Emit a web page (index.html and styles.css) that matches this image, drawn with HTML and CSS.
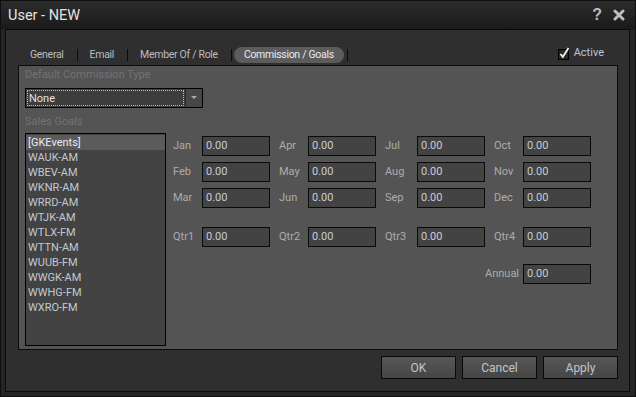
FILE: index.html
```html
<!DOCTYPE html>
<html>
<head>
	<meta charset="utf-8">
	<title>User - NEW</title>
	<link rel="stylesheet" href="styles.css">
</head>
<body>
	<div class="window">
		<div class="titlebar">
			<span class="title">User - NEW</span>
			<span class="help">?</span>
			<svg class="close" width="12" height="12" viewBox="0 0 12 12">
				<path d="M2 2 L10 10 M10 2 L2 10" stroke="#bdbdbd" stroke-width="3" stroke-linecap="round"/>
			</svg>
		</div>
		<div class="frame">
			<div class="tabbar">
				<ul class="tabs">
					<li>General</li>
					<li class="sep"></li>
					<li>Email</li>
					<li class="sep"></li>
					<li>Member Of / Role</li>
					<li class="sep"></li>
					<li class="current">Commission / Goals</li>
					<li class="sep"></li>
				</ul>
				<div class="active-check">
					<svg width="13" height="15" viewBox="0 0 13 15">
						<rect x="0.5" y="3.5" width="10" height="10" fill="#262626" stroke="#000"/>
						<path d="M2.5 8 L4.8 11 L10.5 2" fill="none" stroke="#f2f2f2" stroke-width="1.8"/>
					</svg>
					<span>Active</span>
				</div>
			</div>

			<div class="panel">
				<div class="caption">Default Commission Type</div>
				<div class="combo">
					<div class="combo-text"><span>None</span></div>
					<div class="combo-btn"></div>
				</div>
				<div class="caption caption-goals">Sales Goals</div>
				<div class="goals">
					<ul class="stations">
						<li class="current">[GKEvents]</li>
						<li>WAUK-AM</li>
						<li>WBEV-AM</li>
						<li>WKNR-AM</li>
						<li>WRRD-AM</li>
						<li>WTJK-AM</li>
						<li>WTLX-FM</li>
						<li>WTTN-AM</li>
						<li>WUUB-FM</li>
						<li>WWGK-AM</li>
						<li>WWHG-FM</li>
						<li>WXRO-FM</li>
					</ul>
					<div class="months">
						<span class="lbl first">Jan</span><span class="num">0.00</span>
						<span class="lbl">Apr</span><span class="num">0.00</span>
						<span class="lbl">Jul</span><span class="num">0.00</span>
						<span class="lbl">Oct</span><span class="num">0.00</span>

						<span class="lbl first">Feb</span><span class="num">0.00</span>
						<span class="lbl">May</span><span class="num">0.00</span>
						<span class="lbl">Aug</span><span class="num">0.00</span>
						<span class="lbl">Nov</span><span class="num">0.00</span>

						<span class="lbl first">Mar</span><span class="num">0.00</span>
						<span class="lbl">Jun</span><span class="num">0.00</span>
						<span class="lbl">Sep</span><span class="num">0.00</span>
						<span class="lbl">Dec</span><span class="num">0.00</span>

						<span class="lbl first">Qtr1</span><span class="num">0.00</span>
						<span class="lbl">Qtr2</span><span class="num">0.00</span>
						<span class="lbl">Qtr3</span><span class="num">0.00</span>
						<span class="lbl">Qtr4</span><span class="num">0.00</span>

						<span class="lbl annual">Annual</span><span class="num annual-num">0.00</span>
					</div>
				</div>
			</div>

			<div class="buttons">
				<button>OK</button>
				<button>Cancel</button>
				<button>Apply</button>
			</div>
		</div>
	</div>
</body>
</html>
```

FILE: styles.css
```css
/*先去掉默认边距*/
body,div,ul,li{margin: 0;padding: 0;}
ul{list-style-type: none;}
body{background: #1b1b1b;font: 11px/14px Roboto, "Liberation Sans", sans-serif;color: #c4c8d0;}

.window{
	width: 636px;
	height: 397px;
	box-sizing: border-box;
	border: 1px solid #0f0f0f;
	background: #252525;
}
.titlebar{
	display: flex;
	align-items: center;
	height: 28px;
	padding: 0 10px 0 7px;
	background: linear-gradient(#2c2c2c, #1a1a1a);
}
.title{
	flex: 1;
	font-size: 14.5px;
	color: #e2e2e2;
	padding-top: 1px;
}
.help{
	font: bold 16px "Liberation Sans", sans-serif;
	color: #bdbdbd;
	margin-right: 11px;
}

.frame{
	height: 363px;
	box-sizing: border-box;
	margin: 0 5px 0 4px;
	border: 1px solid #0a0a0a;
	background: #2f2f2f;
	display: flex;
	flex-direction: column;
}

/*标签栏*/
.tabbar{
	height: 35px;
	display: flex;
	align-items: flex-end;
	padding: 0 24px 2px 14px;
	box-sizing: border-box;
}
.tabs{
	flex: 1;
	display: flex;
	align-items: center;
	height: 16px;
}
.tabs li{
	padding: 0 10px;
	height: 16px;
	line-height: 16px;
	font-size: 10.5px;
	letter-spacing: -0.3px;
	color: #bdbdbd;
	white-space: nowrap;
}
.tabs li.current{
	background: #5c5c5c;
	border-radius: 8px;
	color: #e4ebf4;
}
.tabs li.sep{
	padding: 0;
	width: 1px;
	height: 12px;
	margin: 0 2px 0 3px;
	background: #0c0c0c;
}
.active-check{
	display: flex;
	align-items: center;
	gap: 3px;
	color: #b9c3da;
	font-size: 11px;
	height: 20px;
	margin-right: 1px;
}

/*内容面板*/
.panel{
	height: 285px;
	box-sizing: border-box;
	margin: 0 11px 0 12px;
	border: 1px solid #0c0c0c;
	background: #545454;
	padding: 2px 6px 0 6px;
}
.caption{
	height: 14px;
	color: #737373;
}
.combo{
	display: flex;
	width: 178px;
	height: 20px;
	box-sizing: border-box;
	margin-top: 6px;
	border: 1px solid #000;
	background: #3d3d3d;
}
.combo-text{
	flex: 1;
	padding: 1px;
}
.combo-text span{
	display: block;
	height: 16px;
	line-height: 15px;
	box-sizing: border-box;
	border: 1px dotted #bcbcbc;
	color: #e0e0e0;
	padding-left: 1px;
}
.combo-btn{
	width: 16px;
	background: #474747;
	border-left: 1px solid #2a2a2a;
	position: relative;
}
/*下拉小三角*/
.combo-btn:after{
	content: "";
	position: absolute;
	left: 5px;
	top: 7px;
	border: 3px solid transparent;
	border-top: 3px solid #a8a8a8;
}
.caption-goals{margin-top: 7px;}

.goals{
	display: flex;
	margin-top: 4px;
}
.stations{
	width: 141px;
	height: 213px;
	box-sizing: border-box;
	border: 1px solid #000;
	background: #434343;
	padding-top: 1px;
}
.stations li{
	height: 15px;
	line-height: 15px;
	padding-left: 2px;
	color: #c2c8d4;
}
.stations li.current{
	background: #5b5b5b;
	color: #e6ecf5;
}

/*月份网格, 季度行和全年行留出空隙*/
.months{
	display: grid;
	grid-template-columns: 29px 68px 38px 68px 41px 68px 38px 68px;
	grid-template-rows: 20px 20px 20px 33px 31px;
	row-gap: 6px;
	margin: 3px 0 0 7px;
	align-content: start;
	align-items: end;
}
.lbl{
	line-height: 20px;
	padding-left: 9px;
	color: #acacac;
}
.lbl.first{padding-left: 0;}
.num{
	box-sizing: border-box;
	height: 20px;
	line-height: 18px;
	border: 1px solid #0a0a0a;
	background: #434343;
	padding-left: 3px;
	color: #c6ccd6;
}
.lbl.annual{
	grid-column: 7;
	padding: 0 6px 0 0;
	text-align: right;
}
.annual-num{grid-column: 8;}

/*底部按钮*/
.buttons{
	display: flex;
	justify-content: flex-end;
	gap: 6px;
	padding: 6px 11px 0 0;
}
.buttons button{
	width: 75px;
	height: 23px;
	border: 1px solid #0a0a0a;
	background: linear-gradient(#575757, #454545);
	color: #c4c4c4;
	font: 12px Roboto, "Liberation Sans", sans-serif;
	padding: 0;
}
```
